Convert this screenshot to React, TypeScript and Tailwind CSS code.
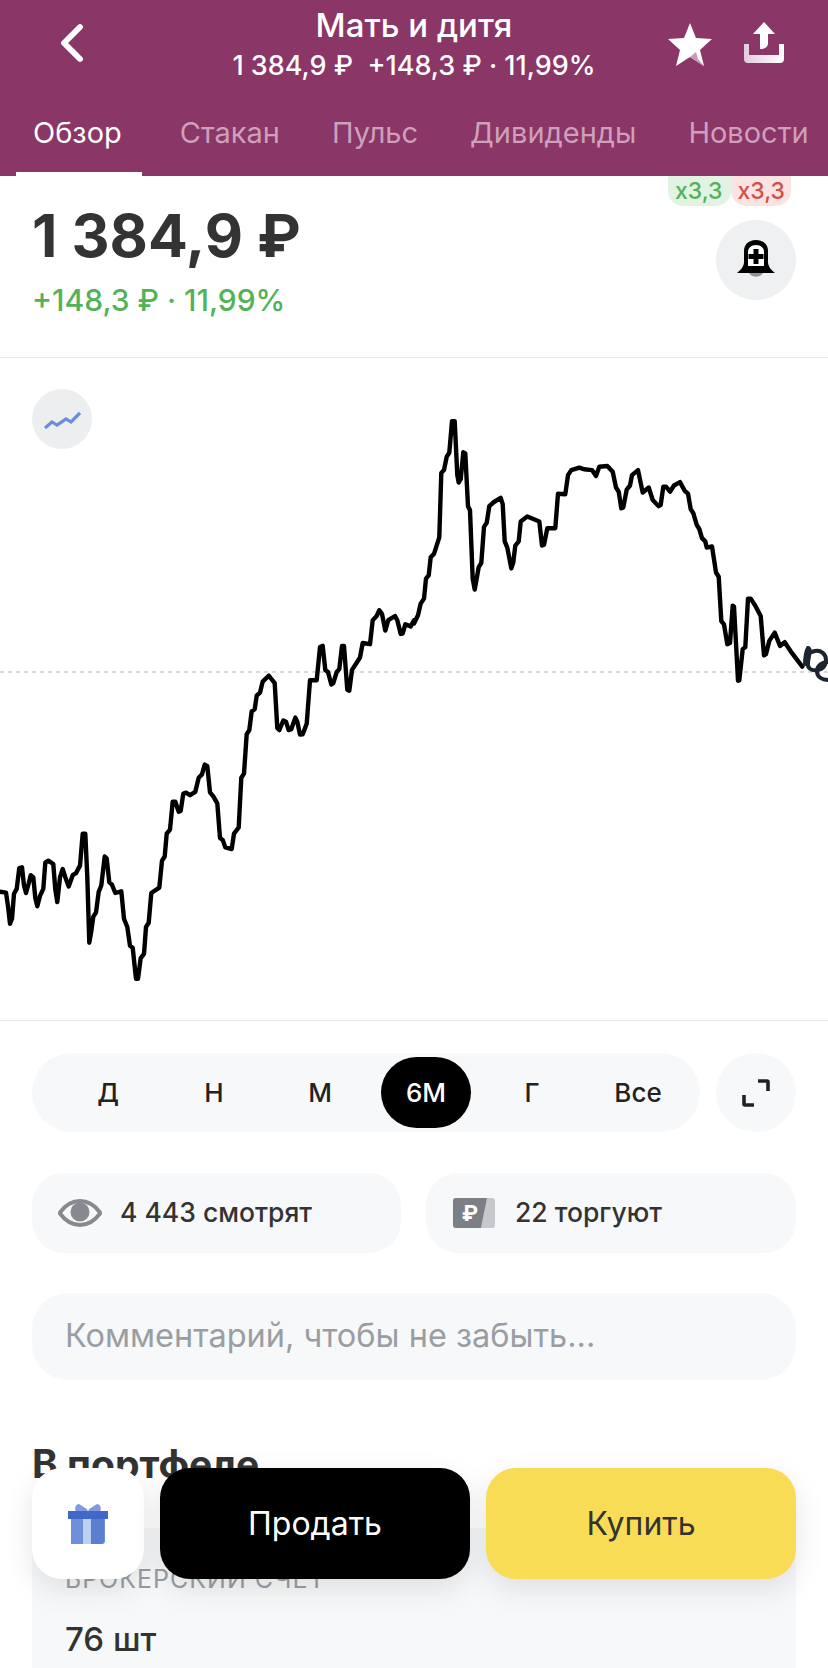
import { ChevronLeft } from "lucide-react";

const font = "font-['Inter','Roboto','Liberation_Sans',sans-serif]";

// traced from the reference: x in full px, y in full px
const left = [
  [0,1285],[18,1287],[24,1320],[30,1362],[36,1350],[42,1290],[50,1278],[58,1228],[66,1226],[72,1270],[78,1288],[86,1265],[92,1245],[100,1250],[106,1300],[112,1320],[120,1295],[130,1278],[136,1215],[145,1210],[160,1218],[166,1280],[172,1310],[180,1250],[188,1230],[196,1250],[206,1272],[218,1245],[228,1240],[240,1222],[248,1145],[256,1145],[262,1250],[268,1408],[274,1380],[280,1345],[288,1335],[296,1285],[304,1270],[314,1200],[320,1205],[328,1262],[336,1268],[346,1288],[364,1284],[372,1350],[382,1370],[390,1415],[398,1420],[408,1495],[414,1495],[422,1445],[432,1435],[438,1370],[446,1360],[454,1288],[478,1275],[486,1210],[494,1200],[500,1145],[510,1135],[518,1068],[526,1068],[536,1092],[542,1090],[550,1048],[558,1046],[570,1052],[586,1044],[596,1010],[606,1002],[614,978],[622,982],[630,1045],[640,1055],[652,1072],[660,1155],[668,1160],[676,1178],[695,1182],[702,1145],[716,1130],[724,1010],[732,1000],[740,905],[748,895],[755,850],[764,845],[770,812],[780,805],[788,778],[806,764],[824,782],[832,890],[838,895],[850,872],[858,875],[866,895],[874,893],[886,865],[892,875],[900,906],[908,905],[920,880],[930,775],[950,775],[960,695],[968,692],[976,750],[984,755],[994,785],[1000,782],[1010,755],[1018,748],[1026,692],[1032,692],[1042,798],[1048,800],[1056,750],[1068,735],[1080,720],[1088,685],[1110,688],[1118,630],[1130,620],[1138,606],[1146,615],[1156,655],[1165,630],[1185,620],[1192,630],[1202,663],[1208,662],[1216,640],[1232,645],[1242,630],
];
const right = [
  [0,638],[12,618],[20,590],[30,578],[36,530],[44,522],[50,478],[60,470],[72,440],[76,430],[82,275],[90,268],[98,236],[106,226],[114,150],[122,150],[130,280],[134,298],[140,290],[148,225],[154,228],[162,355],[168,365],[176,530],[182,556],[188,530],[194,502],[202,492],[210,405],[218,395],[226,355],[240,345],[260,335],[266,350],[272,440],[280,455],[292,505],[298,490],[304,450],[314,440],[320,392],[340,380],[376,392],[384,450],[390,448],[400,408],[424,408],[432,325],[454,326],[462,280],[472,268],[496,262],[510,266],[534,268],[546,282],[556,260],[580,258],[596,272],[606,310],[614,320],[622,360],[628,358],[638,315],[648,305],[654,280],[672,268],[686,322],[704,310],[716,340],[734,355],[740,352],[748,308],[756,308],[768,320],[780,305],[798,297],[812,318],[822,325],[830,362],[838,372],[848,400],[856,410],[864,432],[874,440],[878,455],[894,452],[906,515],[914,525],[922,632],[930,640],[940,688],[948,685],[956,595],[960,597],[972,776],[976,775],[986,700],[994,695],[1002,578],[1010,578],[1024,595],[1040,620],[1050,715],[1056,712],[1066,680],[1082,660],[1098,692],[1112,683],[1130,705],[1165,742],
];
const chartTop = 359;
const toY = (z: number) => 360 + z / 2.412 - chartTop;
const line = [
  ...left.map(([x, y]) => `${(x / 3).toFixed(1)},${toY(y).toFixed(1)}`),
  ...right.map(([x, y]) => `${(414 + x / 3).toFixed(1)},${toY(y).toFixed(1)}`),
].join(" ");

const periods = ["Д", "Н", "М", "6М", "Г", "Все"];
const tabs = [
  { label: "Обзор", active: true },
  { label: "Стакан" },
  { label: "Пульс" },
  { label: "Дивиденды" },
  { label: "Новости" },
];

function BellPlus() {
  return (
    <svg width="40" height="40" viewBox="0 0 40 40">
      <path d="M13 32h14a6 4 0 0 1-14 0Z" fill="#8f9194" />
      <path
        d="M20 0c8 0 12 5 12 11v11c0 4 3 8 7 11H1c4-3 7-7 7-11V11C8 5 12 0 20 0Z"
        fill="#000"
      />
      <path d="M20 5c5 0 8 3 8 7v14H12V12c0-4 3-7 8-7Z" fill="#fff" />
      <path d="M17.500 9h5v5h5v5h-5v5h-5v-5h-5v-5h5Z" fill="#000" />
    </svg>
  );
}

function Gift() {
  return (
    <svg width="42" height="42" viewBox="0 0 42 42">
      <path d="M12 1l8 5 1 3H9C7 5 9 1 12 1ZM30 1l-8 5-1 3h12c2-4 0-8-3-8Z" fill="#7f9bdc" />
      <path d="M3 13h34v26a3 3 0 0 1-3 3H3Z" fill="#6d8ed9" transform="translate(1 -1)" />
      <rect x="16" y="12" width="8" height="29" fill="#bcd0f2" />
      <path d="M24 12h13v25a4 4 0 0 1-4 4h-9Z" fill="#5b7fd0" />
      <rect x="1" y="8" width="40" height="8" fill="#3f68c8" />
    </svg>
  );
}

export default function App() {
  return (
    <div className={`relative h-[1668px] w-[828px] overflow-hidden bg-white ${font}`}>
      <header className="h-[176px] bg-[#8a3666] text-white">
        <div className="relative h-[114px]">
          <div className="pt-[6px] text-center">
            <p className="text-[33px] leading-[38px] font-medium">Мать и дитя</p>
            <p className="mt-[6px] text-[27px] leading-[32px] font-medium whitespace-pre">
              {"1 384,9 ₽  +148,3 ₽ · 11,99%"}
            </p>
          </div>
          <ChevronLeft
            className="absolute top-[11px] left-[40px] h-[64px] w-[64px]"
            strokeWidth={2.200}
          />
          <svg className="absolute top-[22px] left-[667px]" width="46" height="44" viewBox="0 0 46 44">
            <path d="M23 1l6 15 16 1-12 11 4 16-14-9-14 9 4-16L1 17l16-1Z" fill="#fff" />
            <path d="M31 37l6 7-14-9 6-5Z" fill="#c79bb4" />
          </svg>
          <svg className="absolute top-[22px] left-[744px]" width="40" height="42" viewBox="0 0 40 42">
            <defs>
              <linearGradient id="tray" x1="0" y1="0" x2="1" y2="0">
                <stop offset="0" stopColor="#e6cbdc" />
                <stop offset="1" stopColor="#ffffff" />
              </linearGradient>
            </defs>
            <path d="M20 0l11 12h-7v9c0 4-3 6-8 6V12H9Z" fill="#fff" />
            <path d="M0 22h5v11h30V22h5v15a4 4 0 0 1-4 4H4a4 4 0 0 1-4-4Z" fill="url(#tray)" />
          </svg>
        </div>
        <nav className="flex h-[62px] pl-[16px] text-[29px] leading-[36px]">
          {tabs.map((t) => (
            <div
              key={t.label}
              className={`h-[62px] pt-[1px] whitespace-nowrap ${
                t.active
                  ? "mr-[21px] border-b-4 border-white pr-[20px] pl-[17px] text-white"
                  : "mr-[18px] px-[17px] text-[#cf9fbc]"
              }`}
            >
              {t.label}
            </div>
          ))}
        </nav>
      </header>

      <section className="relative h-[182px] border-b border-[#e8e9ea] px-[32px]">
        <p className="pt-[28px] text-[59px] leading-[64px] font-bold text-[#333333]">1 384,9 ₽</p>
        <p className="mt-[14px] text-[30px] leading-[36px] font-medium text-[#53b257]">
          +148,3 ₽ · 11,99%
        </p>
        <div className="absolute top-0 right-[37px] flex text-[23px] leading-[30px] font-medium">
          <span className="rounded-b-[15px] bg-[#e2f3e3] pr-[9px] pl-[7px] text-[#53b257]">x3,3</span>
          <span className="rounded-b-[15px] bg-[#fbe3e3] px-[6px] text-[#d0504a]">x3,3</span>
        </div>
        <button className="absolute top-[44px] right-[32px] flex h-[80px] w-[80px] items-center justify-center rounded-full bg-[#eef0f1]">
          <BellPlus />
        </button>
      </section>

      <section className="relative h-[663px] border-b border-[#e8e9ea]">
        <svg className="h-[662px] w-[828px]" viewBox="0 0 828 662">
          <line x1="0" y1="314" x2="828" y2="314" stroke="#cfcfcf" strokeWidth="1.500" strokeDasharray="4 4" />
          <polyline points={line} fill="none" stroke="#000" strokeWidth="4.400" strokeLinejoin="round" strokeLinecap="round" />
          <path
            d="M805 308c0-8 1-15 3-18 3 0 1 8 0 14-1 6 3 9 8 8 6 0 10-4 10-10 0-6-5-10-11-9-6 1-9 6-9 11 M828 304c-6 0-11 4-11 9 0 6 5 9 11 9"
            fill="none"
            stroke="#1c2430"
            strokeWidth="4"
          />
        </svg>
        <button className="absolute top-[31px] left-[32px] flex h-[60px] w-[60px] items-center justify-center rounded-full bg-[#eceef0]">
          <svg width="38" height="24" viewBox="0 0 38 24">
            <path d="M2 21l7-6 5 3 9-6 5 3 9-9" fill="none" stroke="#6c8ddb" strokeWidth="3.200" />
          </svg>
        </button>
      </section>

      <section className="px-[32px] pt-[32px]">
        <div className="flex gap-[16px]">
          <div className="flex h-[79px] flex-1 items-center rounded-full bg-[#f7f8f9] pr-[9px] pl-[23px]">
            {periods.map((p) => (
              <div key={p} className="flex flex-1 justify-center">
                <span
                  className={`flex h-[71px] w-[90px] items-center justify-center rounded-full text-[26px] font-medium ${
                    p === "6М" ? "bg-black text-white" : "text-[#222]"
                  }`}
                >
                  {p}
                </span>
              </div>
            ))}
          </div>
          <button className="flex h-[79px] w-[80px] items-center justify-center rounded-full bg-[#f7f8f9]">
            <svg width="30" height="30" viewBox="0 0 30 30">
              <path d="M17 3h9a1 1 0 0 1 1 1v9M3 17v9a1 1 0 0 0 1 1h9" fill="none" stroke="#222" strokeWidth="3.600" />
            </svg>
          </button>
        </div>

        <div className="mt-[41px] flex gap-[25px]">
          <div className="flex h-[80px] flex-1 items-center gap-[18px] rounded-[32px] bg-[#f7f8f9] pl-[26px] text-[26.500px] font-medium text-[#333]">
            <svg width="44" height="28" viewBox="0 0 44 28">
              <path d="M1.500 14C8 5 14 2 22 2s14 3 20.500 12C36 23 30 26 22 26S8 23 1.500 14Z" fill="none" stroke="#86898e" strokeWidth="4" />
              <circle cx="22" cy="13" r="9.500" fill="#86898e" />
            </svg>
            4 443 смотрят
          </div>
          <div className="flex h-[80px] flex-1 items-center gap-[20px] rounded-[32px] bg-[#f7f8f9] pl-[27px] text-[26.500px] font-medium text-[#333]">
            <div className="relative h-[30px] w-[42px] overflow-hidden rounded-[3px] bg-[#c6c8cb]">
              <div className="absolute top-0 left-0 flex h-[30px] w-[34px] items-center justify-center bg-[#7c7f85] text-[22px] leading-none font-bold text-white [clip-path:polygon(0_0,100%_0,82%_100%,0_100%)]">
                ₽
              </div>
            </div>
            22 торгуют
          </div>
        </div>

        <div className="mt-[40px] flex h-[87px] items-center rounded-[36px] bg-[#f7f8f9] pl-[33px] text-[32.500px] text-[#9a9ea3]">
          Комментарий, чтобы не забыть...
        </div>

        <h2 className="mt-[62px] text-[39px] leading-[44px] font-bold text-[#333]">В портфеле</h2>

        <div className="mt-[42px] h-[200px] rounded-t-[24px] bg-[#f7f8f9] px-[33px] pt-[36px]">
          <p className="text-[25px] leading-[30px] tracking-[1px] text-[#9a9ea3] uppercase">Брокерский счет</p>
          <p className="mt-[25px] text-[33px] leading-[40px] font-medium text-[#333]">76 шт</p>
        </div>
      </section>

      <div className="absolute top-[1468px] right-[32px] left-[32px] flex gap-[16px]">
        <button className="flex h-[111px] w-[112px] items-center justify-center rounded-[30px] bg-white shadow-[0_10px_30px_rgba(0,0,0,0.1)]">
          <Gift />
        </button>
        <button className="flex h-[111px] flex-1 items-center justify-center rounded-[30px] bg-black text-[32px] text-white shadow-[0_10px_30px_rgba(0,0,0,0.1)]">
          Продать
        </button>
        <button className="flex h-[111px] flex-1 items-center justify-center rounded-[30px] bg-[#f9dc55] text-[32px] text-[#333] shadow-[0_10px_30px_rgba(0,0,0,0.1)]">
          Купить
        </button>
      </div>
    </div>
  );
}
